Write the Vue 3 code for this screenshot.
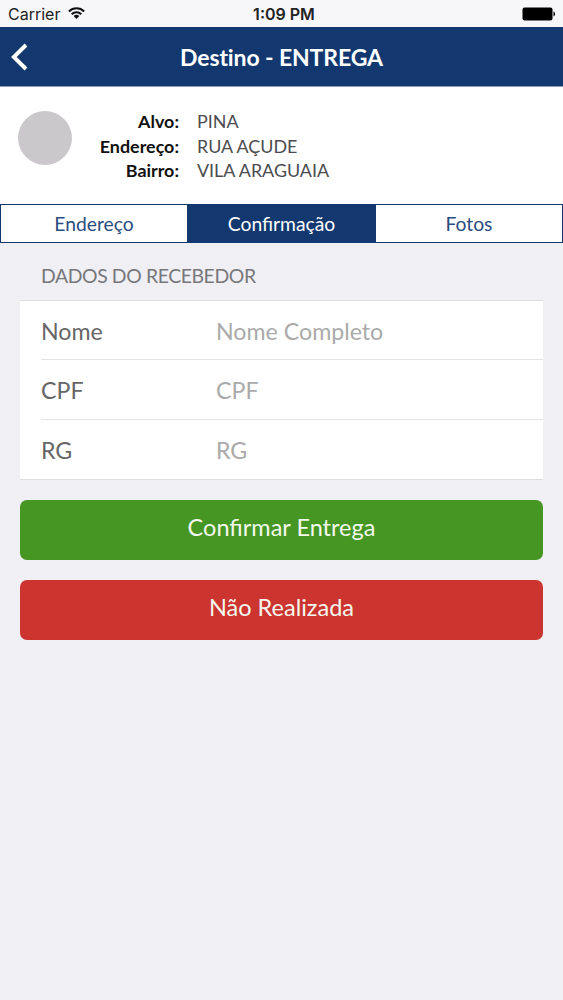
<script setup>

import { ref, reactive } from 'vue';

const tabs = ['Endereço', 'Confirmação', 'Fotos'];

const activeTab = ref('Confirmação');

// delivery info shown on top
const destino = [
  { label: 'Alvo:', value: 'PINA' },
  { label: 'Endereço:', value: 'RUA AÇUDE' },
  { label: 'Bairro:', value: 'VILA ARAGUAIA' },
];

// receiver fields
const fields = [
  { key: 'nome', label: 'Nome', placeholder: 'Nome Completo' },
  { key: 'cpf', label: 'CPF', placeholder: 'CPF' },
  { key: 'rg', label: 'RG', placeholder: 'RG' },
];

const form = reactive({ nome: '', cpf: '', rg: '' });

</script>

<template>
  <div class="screen">

    <div class="status-bar">
      <div class="carrier">
        <span>Carrier</span>
        <svg class="wifi" width="17" height="12" viewBox="0 0 17 12" fill="none" stroke="#111" stroke-width="2">
          <path d="M0.9 4.5a10.8 10.8 0 0 1 15.2 0" />
          <path d="M3.7 7.3a6.8 6.8 0 0 1 9.6 0" />
          <path d="M8.5 12L5.6 9.1a4.1 4.1 0 0 1 5.8 0z" fill="#111" stroke="none" />
        </svg>
      </div>
      <span class="time">1:09 PM</span>
      <div class="battery">
        <svg width="34" height="14" viewBox="0 0 34 14">
          <rect x="0.5" y="0.5" width="30" height="13" rx="2" fill="#000" />
          <path d="M31.5 4.6c2 .6 2 4.2 0 4.8z" fill="#000" />
        </svg>
      </div>
    </div>

    <header class="nav-bar">
      <button class="back" aria-label="Voltar">
        <svg width="17" height="28" viewBox="0 0 17 28" fill="none" stroke="#fff" stroke-width="4">
          <path d="M15 2L2.8 14L15 26" />
        </svg>
      </button>
      <h1>Destino - ENTREGA</h1>
    </header>

    <section class="info">
      <div class="avatar"></div>
      <dl>
        <template v-for="item in destino" :key="item.label">
          <dt>{{ item.label }}</dt>
          <dd>{{ item.value }}</dd>
        </template>
      </dl>
    </section>

    <nav class="tabs">
      <button v-for="tab in tabs" :key="tab" :class="{ active: tab === activeTab }" @click="activeTab = tab">
        {{ tab }}
      </button>
    </nav>

    <main>
      <h2>DADOS DO RECEBEDOR</h2>

      <div class="card">
        <label v-for="field in fields" :key="field.key" class="row">
          <span>{{ field.label }}</span>
          <input v-model="form[field.key]" type="text" :placeholder="field.placeholder">
        </label>
      </div>

      <button class="btn confirm">Confirmar Entrega</button>
      <button class="btn refuse">Não Realizada</button>
    </main>

  </div>
</template>

<style>
body {
  margin: 0;
  background: #efeff4;
}
</style>

<style scoped>
.screen {
  min-height: 1000px;
  background: #efeff4;
  font-family: Lato, sans-serif;
}

button,
input {
  font-family: inherit;
  border: none;
  margin: 0;
  padding: 0;
}

.status-bar {
  display: grid;
  grid-template-columns: 1fr auto 1fr;
  align-items: center;
  height: 27px;
  padding: 1px 7px 0 8px;
  box-sizing: border-box;
  background: #f7f6f9;
  font-family: Inter, sans-serif;
  font-size: 16px;
  color: #222;
}

.carrier {
  display: flex;
  align-items: center;
  gap: 8px;
}

.wifi {
  margin-top: -2px;
}

.time {
  padding-left: 4px;
  font-weight: 600;
}

.battery {
  display: flex;
  justify-content: flex-end;
}

.nav-bar {
  display: grid;
  grid-template-columns: 40px 1fr 40px;
  align-items: center;
  height: 59px;
  background: #12386f;
  border-bottom: 1px solid #8b9bb8;
  box-sizing: content-box;
}

.back {
  display: flex;
  padding-left: 11px;
  background: none;
}

h1 {
  margin: 0;
  text-align: center;
  font-size: 23px;
  font-weight: 700;
  letter-spacing: -0.12px;
  font-variant-ligatures: none;
  color: #fff;
}

.info {
  display: flex;
  height: 117px;
  box-sizing: border-box;
  padding: 22px 18px 0;
  background: #fff;
}

.avatar {
  width: 54px;
  height: 54px;
  margin-top: 2px;
  border-radius: 50%;
  background: #cbc8cc;
}

dl {
  display: grid;
  grid-template-columns: 107px auto;
  grid-auto-rows: 24.5px;
  column-gap: 18px;
  margin: 0;
  font-size: 17.9px;
  line-height: 24px;
}

dt {
  text-align: right;
  font-weight: 700;
  color: #111;
}

dd {
  margin: 0;
  color: #4c4c50;
}

.tabs {
  display: grid;
  grid-template-columns: 186px 189px 1fr;
  height: 39px;
  box-sizing: border-box;
  border: 1px solid #12386f;
}

.tabs button {
  font-size: 19.3px;
  color: #2b4c80;
  background: #fff;
}

.tabs button.active {
  color: #fff;
  background: #12386f;
}

main {
  padding: 0 20px;
}

h2 {
  margin: 0;
  padding: 21px 21px 0;
  height: 57px;
  box-sizing: border-box;
  font-size: 19.4px;
  line-height: 24px;
  font-weight: 400;
  letter-spacing: -0.4px;
  color: #77777b;
}

.card {
  padding-left: 21px;
  border-top: 1px solid #dedee2;
  border-bottom: 1px solid #dedee2;
  background: #fff;
}

.row {
  display: grid;
  grid-template-columns: 175px 1fr;
  align-items: center;
  height: 60px;
  box-sizing: border-box;
  font-size: 23.2px;
  color: #666;
}

.row:first-child {
  height: 58px;
  padding-top: 2px;
}

.row:last-child {
  padding-top: 1px;
}

.row + .row {
  border-top: 1px solid #e4e4e6;
}

.row input {
  min-width: 0;
  font-size: inherit;
  color: #444;
  background: none;
  outline: none;
}

.row input::placeholder {
  color: #aaa;
  opacity: 1;
}

.btn {
  display: block;
  width: 100%;
  height: 60px;
  margin-top: 20px;
  padding-bottom: 7px;
  border-radius: 7px;
  font-size: 23.5px;
  color: #f4f8ee;
}

.confirm {
  background: #459622;
}

.refuse {
  background: #cc3430;
}
</style>
